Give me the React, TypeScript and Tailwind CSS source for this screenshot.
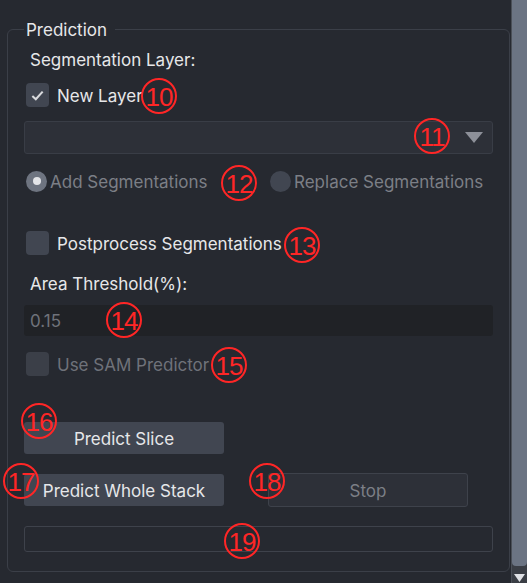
import React from "react";

const font = { fontFamily: "Inter, 'Liberation Sans', sans-serif" };

function Mark({ n, x, y }: { n: string; x: number; y: number }) {
  return (
    <div
      className="absolute flex h-[36px] w-[36px] items-center justify-center rounded-full border-2 border-[#ff2626] pt-[1px] text-[26px] leading-none text-[#ff2626]"
      style={{ left: x - 18, top: y - 18, fontFamily: "'Liberation Sans', sans-serif", letterSpacing: "-1px" }}
    >
      {n}
    </div>
  );
}

function Check({ checked, dim }: { checked?: boolean; dim?: boolean }) {
  return (
    <div
      className={`flex h-[24px] w-[23px] items-center justify-center rounded-[4px] ${
        dim ? "bg-[#3b3f48]" : "bg-[#414651]"
      }`}
    >
      {checked && (
        <svg width="15" height="15" viewBox="0 0 16 16">
          <path d="M2.5 8.5 L6.2 12 L13.5 3.8" fill="none" stroke="#d9dadd" strokeWidth="2.2" />
        </svg>
      )}
    </div>
  );
}

export default function App() {
  return (
    <div
      className="relative flex h-[583px] w-[527px] overflow-hidden bg-[#262930] text-[17px] text-[#e6e7e9]"
      style={font}
    >
      <div className="flex-1">
        <div className="relative ml-[7px] mt-[29px] h-[543px] w-[503px] rounded-[6px] border border-[#3b3f48] px-[16px]">
          <span className="absolute left-[16px] top-[-11px] bg-[#262930] pr-[8px] pl-[2px] leading-[22px] text-[#e6e7e9]">
            Prediction
          </span>

          <div className="ml-[6px] mt-[20px] h-[20px] leading-[20px]">Segmentation Layer:</div>

          <div className="ml-[2px] mt-[13px] flex h-[24px] items-center gap-[8px]">
            <Check checked />
            <span className="pt-[4px]">New Layer</span>
          </div>

          <div className="mt-[14px] flex h-[33px] items-center justify-end rounded-[3px] border border-[#393d46] bg-[#2d3038] pr-[9px]">
            <svg width="18" height="11" viewBox="0 0 18 11">
              <path d="M0 0 H18 L9 11 Z" fill="#8d9099" />
            </svg>
          </div>

          <div className="ml-[2px] mt-[16px] flex h-[22px] items-center text-[#7c7f86]">
            <div className="flex w-[244px] items-center gap-[3px]">
              <div className="flex h-[21px] w-[21px] items-center justify-center rounded-full bg-[#6e7480]">
                <div className="h-[8px] w-[8px] rounded-full bg-[#e4e5e8]" />
              </div>
              <span className="pt-[4px]">Add Segmentations</span>
            </div>
            <div className="flex items-center gap-[3px]">
              <div className="h-[21px] w-[21px] rounded-full bg-[#414651]" />
              <span className="pt-[4px]">Replace Segmentations</span>
            </div>
          </div>

          <div className="ml-[2px] mt-[39px] flex h-[24px] items-center gap-[8px]">
            <Check />
            <span className="pt-[4px]">Postprocess Segmentations</span>
          </div>

          <div className="ml-[6px] mt-[19px] h-[20px] leading-[20px]">Area Threshold(%):</div>

          <div className="mt-[11px] flex h-[31px] items-center rounded-[3px] bg-[#202226] pl-[6px] pt-[3px] text-[#6f727a]">
            0.15
          </div>

          <div className="ml-[2px] mt-[16px] flex h-[24px] items-center gap-[8px] text-[#6f727a]">
            <Check dim />
            <span className="pt-[4px]">Use SAM Predictor</span>
          </div>

          <button className="mt-[46px] flex h-[32px] w-[200px] items-center justify-center rounded-[3px] bg-[#414651] pt-[4px] text-[#e6e7e9]">
            Predict Slice
          </button>

          <div className="mt-[19px] flex h-[34px] items-center gap-[44px]">
            <button className="flex h-[32px] w-[200px] items-center justify-center rounded-[3px] bg-[#414651] pt-[4px] text-[#e6e7e9]">
              Predict Whole Stack
            </button>
            <button className="flex h-[34px] w-[200px] items-center justify-center rounded-[3px] border border-[#3e424b] bg-[#2d3038] pt-[4px] text-[#7c7f86]">
              Stop
            </button>
          </div>

          <div className="mt-[19px] h-[26px] rounded-[3px] border border-[#3e424b]" />
        </div>
      </div>

      <div className="flex w-[16px] flex-col border-l border-[#4a4f57] bg-[#3a3e45]">
        <div className="h-[566px] rounded-b-[4px] bg-[#6b7483]" />
        <div className="flex flex-1 items-end justify-center pb-[1px]">
          <svg width="11" height="8" viewBox="0 0 11 8">
            <path d="M0 0 H11 L5.5 8 Z" fill="#dfe1e5" />
          </svg>
        </div>
      </div>

      <Mark n="10" x={159} y={96} />
      <Mark n="11" x={432} y={136} />
      <Mark n="12" x={239} y={183} />
      <Mark n="13" x={302} y={245} />
      <Mark n="14" x={124} y={320} />
      <Mark n="15" x={229} y={365} />
      <Mark n="16" x={39} y={421} />
      <Mark n="17" x={21} y={481} />
      <Mark n="18" x={267} y={481} />
      <Mark n="19" x={242} y={541} />
    </div>
  );
}
